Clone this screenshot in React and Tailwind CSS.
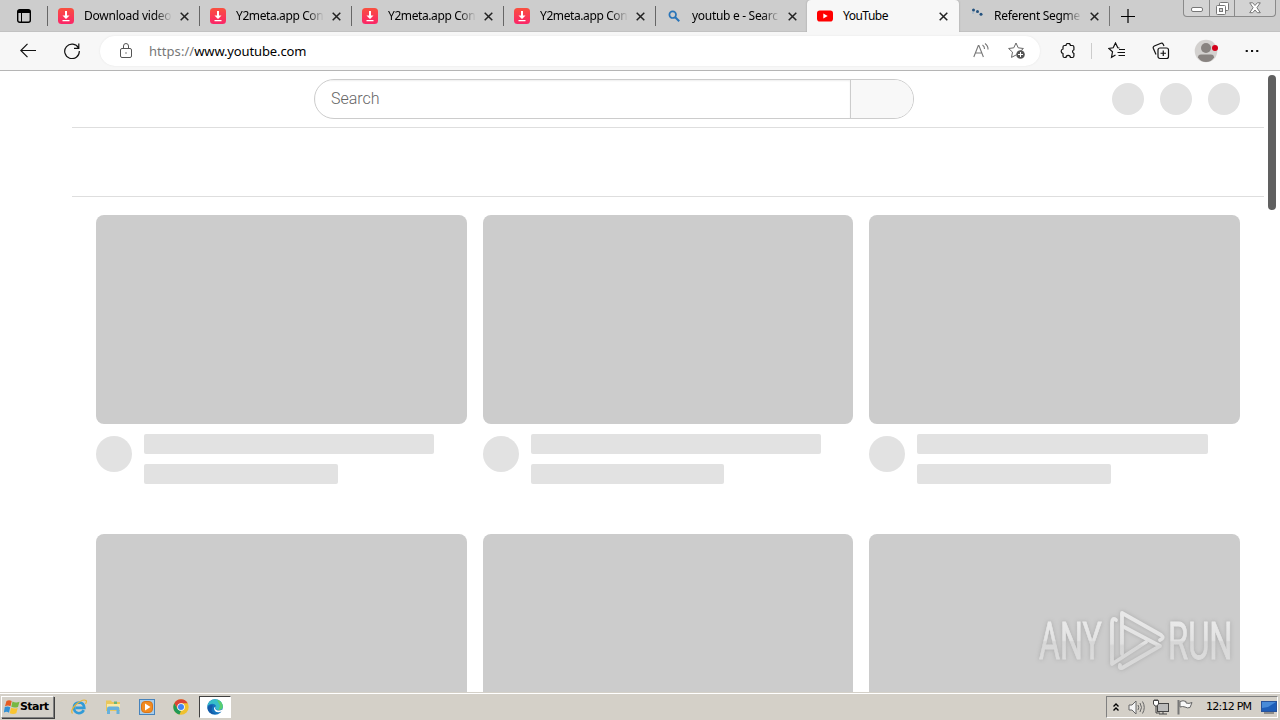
import clsx from 'clsx';

const tabs = [
    { title: 'Download video', icon: 'y2', spacing: 'tracking-[-0.25px]' },
    { title: 'Y2meta.app Con', icon: 'y2', spacing: 'tracking-[-0.4px]' },
    { title: 'Y2meta.app Con', icon: 'y2', spacing: 'tracking-[-0.4px]' },
    { title: 'Y2meta.app Con', icon: 'y2', spacing: 'tracking-[-0.4px]' },
    { title: 'youtub e - Searc', icon: 'search', spacing: 'tracking-[-0.3px]' },
    { title: 'YouTube', icon: 'youtube', active: true, spacing: 'tracking-[-0.5px]' },
    { title: 'Referent Segme', icon: 'dots', spacing: 'tracking-[-0.3px]' },
];

const Icon = ({ size = 16, className, children }) => (
    <svg width={size} height={size} viewBox={`0 0 ${size} ${size}`} fill="none" stroke="currentColor" strokeWidth="1" className={clsx('block shrink-0', className)}>
        {children}
    </svg>
);

const Favicon = ({ name }) => {
    if (name === 'y2') {
        return (
            <Icon>
                <defs>
                    <linearGradient id="y2" x1="0" y1="0" x2="0" y2="1">
                        <stop offset="0" stopColor="#f9503f" />
                        <stop offset="1" stopColor="#fb2568" />
                    </linearGradient>
                </defs>
                <rect width="16" height="16" rx="3.5" fill="url(#y2)" stroke="none" />
                <path d="M7 3h2v4.500h2.500L8 11 4.500 7.500H7zM4.500 12h7v1.300h-7z" fill="#fff" stroke="none" />
            </Icon>
        );
    }
    if (name === 'search') {
        return (
            <Icon className="text-[#2874b8]">
                <circle cx="6.700" cy="6.700" r="3.300" strokeWidth="1.700" />
                <path d="M9.200 9.200l4 4" strokeWidth="2" />
            </Icon>
        );
    }
    if (name === 'youtube') {
        return (
            <Icon>
                <rect y="2.500" width="16" height="11" rx="2.800" fill="#f00" stroke="none" />
                <path d="M6.300 5.500v5l4.400-2.500z" fill="#fff" stroke="none" />
            </Icon>
        );
    }
    return (
        <Icon>
            <g stroke="none" fill="#23527f">
                <circle cx="5.500" cy="2" r="1.500" />
                <circle cx="9.500" cy="3.500" r="1.500" />
                <circle cx="13" cy="6.300" r="1.500" />
                <circle cx="5" cy="5" r="0.800" fill="#8db1cd" />
            </g>
        </Icon>
    );
};

const Tab = ({ tab }) => (
    <div className={clsx('flex h-8 w-[152px] shrink-0 items-center pl-[10px]', tab.active && 'rounded-t-[4px] bg-[#f7f7f7] shadow-[0_0_2px_#999]')}>
        <Favicon name={tab.icon} />
        <span className={clsx('ml-[10px] w-[88px] text-[12px] leading-4 whitespace-nowrap text-black', tab.spacing, !tab.active && 'mask-r-from-80%')}>{tab.title}</span>
        <Icon size={9} className="ml-2 text-[#222]">
            <path d="M.7.7l7.600 7.600M8.300.7L.7 8.300" strokeWidth="1.500" />
        </Icon>
    </div>
);

const Divider = () => <div className="-ml-px h-5 w-px shrink-0 bg-[#666]" />;

const TabStrip = () => (
    <div className="flex h-8 shrink-0 items-center bg-[#cdcdcd] shadow-[inset_0_-1px_0_#c2c2c2]">
        <div className="flex w-12 shrink-0 pl-[17px]">
            <Icon size={14} className="text-black">
                <rect x=".7" y=".7" width="12.600" height="12.600" rx="2" strokeWidth="1.400" />
                <path d="M1 2.500h12" strokeWidth="3" />
                <path d="M4.500 3v10" />
            </Icon>
        </div>
        {tabs.map((tab, i) => (
            <div key={i} className={clsx('flex items-center', i > 4 && '-ml-px')}>
                {i < 5 && <Divider />}
                <Tab tab={tab} />
            </div>
        ))}
        <div className="-ml-px h-5 w-px bg-[#777]" />
        <Icon size={14} className="ml-[11px] text-black">
            <path d="M7 0v14M0 7.500h14" strokeWidth="1.200" />
        </Icon>
        <div className="mr-1 ml-auto flex h-[17px] w-[93px] self-start rounded-b-[4px] border border-t-0 border-[#8a8a8a] bg-[#d3d3d3] text-[#777]">
            <div className="flex w-[26px] justify-center border-r border-[#8a8a8a] pt-[7px]">
                <Icon size={12}>
                    <rect x=".5" y=".5" width="11" height="4" rx="1.500" fill="#fff" />
                </Icon>
            </div>
            <div className="flex w-[25px] justify-center border-r border-[#8a8a8a] pt-[2px]">
                <Icon size={13}>
                    <rect x="3.500" y=".5" width="9" height="8" rx="1" fill="#fff" />
                    <rect x=".5" y="3.500" width="9" height="9" rx="1" fill="#fff" />
                    <rect x="3.500" y="6.500" width="3" height="3" fill="#d3d3d3" />
                </Icon>
            </div>
            <div className="flex flex-1 justify-center pt-[2px]">
                <Icon size={12}>
                    <path d="M.7.800h3L6 3.500 8.300.8h3L7.900 5.700l3.400 5H8.300L6 8 3.700 10.700h-3l3.400-5z" fill="#fff" />
                </Icon>
            </div>
        </div>
    </div>
);

const Toolbar = () => (
    <div className="flex h-[39px] shrink-0 items-center border-b border-[#b5b5b5] bg-[#f7f7f7] text-[#111]">
        <Icon size={16} className="ml-5">
            <path d="M16 7.500H.8M7.500.8L.8 7.500l6.700 6.700" strokeWidth="1.200" />
        </Icon>
        <Icon size={16} className="ml-[28px]">
            <path d="M14.500 5A7.300 7.300 0 1 0 15.300 8M14.800.5v4.800H10" strokeWidth="1.200" />
        </Icon>
        <div className="ml-5 flex h-[30px] w-[940px] shrink-0 items-center rounded-full bg-white pr-[14px] pl-[19px] shadow-[0_0_2px_#e3e3e3]">
            <Icon size={14} className="h-4 text-[#555]">
                <rect x="1.500" y="4.500" width="11" height="9" rx="1.500" />
                <path d="M4.500 4V2a2.500 2.500 0 0 1 5 0v2" />
                <circle cx="7" cy="9" r=".7" fill="currentColor" stroke="none" />
            </Icon>
            <div className="ml-4 text-[13px] leading-4 text-black">
                <span className="tracking-[0.05px] text-[#777]">https://</span>
                <span className="tracking-[-0.12px]">www.youtube.com</span>
            </div>
            <Icon size={16} className="ml-auto text-[#777]">
                <path d="M.8 14L5.300 2.500h.6L10.400 14M2.300 10h6.600M9.500 2q2.200 1.500 2 4M12 .5q3.300 2.500 3 6" strokeWidth="1.100" />
            </Icon>
            <Icon size={18} className="ml-[19px] text-[#666]">
                <path d="M8 1l2.200 4.800 5.200.7-3.500 3.200M8 1L5.800 5.800l-5.200.7 3.900 3.600-1 5.300L8 13" />
                <circle cx="12.500" cy="12.500" r="4.300" fill="#555" stroke="none" />
                <path d="M12.500 10v5M10 12.500h5" stroke="#fff" />
            </Icon>
        </div>
        <Icon size={16} className="ml-[20px]">
            <path d="M3 4q0-1.500 1.500-1.500H6a2.200 2.200 0 0 1 4.400 0h2q1.500 0 1.500 1.500v2.700a2 2 0 0 0 0 3.800v2.500q0 1.500-1.500 1.500h-2a2.200 2.200 0 0 0-4.400 0H4.500Q3 14.500 3 13v-2.500a2.300 2.300 0 0 1 0-4.500z" strokeWidth="1.200" />
        </Icon>
        <div className="ml-[15px] h-4 w-px bg-[#ccc]" />
        <Icon size={18} className="ml-[16px]">
            <path d="M11.500 6L9.800 5.800 7.500 1 5.200 5.800.8 6.400l3.700 3.400-1 5.500L7.500 13M11 7.500h6M9.500 10.500H17M10.500 13.500H17" strokeWidth="1.200" />
        </Icon>
        <Icon size={18} className="ml-[26px]">
            <rect x="6" y="6" width="10.500" height="10.500" rx="2" strokeWidth="1.200" />
            <path d="M11.250 8.500v5.500M8.500 11.250H14M4 12.500L1.300 6.300Q.8 4.800 2.300 4L9 1.200q1.400-.5 2.200 1L12 4" strokeWidth="1.200" />
        </Icon>
        <Icon size={24} className="ml-[24px]">
            <g stroke="none">
                <circle cx="12" cy="12" r="11.300" fill="#d3d1cf" />
                <circle cx="12" cy="9" r="5" fill="#888380" />
                <path d="M4 18.500q0-3 3-3h10q3 0 3 3-3 4.500-8 4.500t-8-4.500z" fill="#888380" />
                <circle cx="21" cy="9" r="3" fill="#d4001a" />
            </g>
        </Icon>
        <Icon size={14} className="ml-[27px]">
            <path d="M.7 7h2.100M6 7h2.100M11.200 7h2.100" strokeWidth="2" />
        </Icon>
    </div>
);

const VideoCard = ({ short }) => (
    <div>
        <div className="h-[209px] rounded-lg bg-[#ccc]" />
        {!short && (
            <div className="flex gap-3 pt-[10px]">
                <div className="mt-[2px] size-9 shrink-0 rounded-full bg-[#e2e2e2]" />
                <div className="flex flex-1 flex-col gap-[10px]">
                    <div className="h-5 w-[90%] rounded-[2px] bg-[#e2e2e2]" />
                    <div className="h-5 w-[60%] rounded-[2px] bg-[#e2e2e2]" />
                </div>
            </div>
        )}
    </div>
);

const Watermark = () => (
    <svg width="200" height="70" viewBox="0 0 200 70" className="absolute top-[535px] left-[1036px] block drop-shadow-[0_0_2px_#aaa]">
        <defs>
            <linearGradient id="wm" gradientUnits="userSpaceOnUse" x1="0" y1="5" x2="0" y2="65">
                <stop offset="0" stopColor="#e9e9e9" />
                <stop offset=".54" stopColor="#e2e2e2" />
                <stop offset=".58" stopColor="#d6d6d6" />
                <stop offset="1" stopColor="#dadada" />
            </linearGradient>
            <linearGradient id="wmText" gradientUnits="userSpaceOnUse" x1="0" y1="-36" x2="0" y2="0">
                <stop offset="0" stopColor="#e9e9e9" />
                <stop offset=".48" stopColor="#e3e3e3" />
                <stop offset=".52" stopColor="#d7d7d7" />
                <stop offset="1" stopColor="#dcdcdc" />
            </linearGradient>
        </defs>
        <g fill="url(#wmText)" stroke="url(#wmText)" strokeWidth=".8" className="font-['Roboto',sans-serif]" fontSize="51">
            <text transform="translate(3 53) scale(.64 1)" textLength="98" lengthAdjust="spacingAndGlyphs">ANY</text>
            <text transform="translate(132 53) scale(.64 1)" textLength="101" lengthAdjust="spacingAndGlyphs">RUN</text>
        </g>
        <g fill="none" stroke="url(#wm)" strokeWidth="3.800" strokeLinecap="round" strokeLinejoin="round">
            <path d="M80 14q-4-3-4 3v41l34-22" />
            <path d="M86 48V7L125 29q4 3-1 5" />
            <path d="M88 21l36 19-38 22q-3 1-2-3" />
        </g>
    </svg>
);

const YouTubePage = () => (
    <div className="relative h-[621px] shrink-0 overflow-hidden bg-white">
        <div className="mr-4 ml-[72px]">
            <div className="flex h-[57px] items-center border-b border-[#dedede]">
                <div className="ml-[242px] flex h-10 w-[600px] overflow-hidden rounded-full border border-[#ccc]">
                    <div className="flex-1 pt-[7px] pl-4 font-['Roboto',sans-serif] text-[16px] leading-6 font-light text-[#666] shadow-[inset_0_1px_2px_#eee]">Search</div>
                    <div className="w-[63px] border-l border-[#ccc] bg-[#f8f8f8]" />
                </div>
                <div className="mr-6 ml-auto flex gap-4">
                    <div className="size-8 rounded-full bg-[#e2e2e2]" />
                    <div className="size-8 rounded-full bg-[#e2e2e2]" />
                    <div className="size-8 rounded-full bg-[#e2e2e2]" />
                </div>
            </div>
            <div className="h-[69px] border-b border-[#dedede]" />
            <div className="grid grid-cols-3 gap-x-4 gap-y-[50px] px-6 pt-[18px]">
                {[0, 1, 2, 3, 4, 5].map((n) => (
                    <VideoCard key={n} short={n > 2} />
                ))}
            </div>
        </div>
        {/* Scrollbar thumb */}
        <div className="absolute top-1 right-1 h-[135px] w-2 rounded-full bg-[#606060]" />
        <Watermark />
    </div>
);

const Taskbar = () => (
    <div className="flex h-7 shrink-0 items-center bg-[#d4d0c8] pt-[2px] shadow-[inset_0_1px_0_#d4d0c8,inset_0_2px_0_#fff]">
        <div className="ml-px flex h-[22px] w-[53px] items-center border border-t-white border-r-[#808080] border-b-[#808080] border-l-white pl-[2px] shadow-[1px_1px_0_#404040]">
            <Icon size={16}>
                <g stroke="none">
                    <path d="M2.500 2Q5 .3 7.700 2L6.500 7.300Q4 5.800 1 7.300z" fill="#e65c22" />
                    <path d="M8.500 2.500Q12 4.300 15.500 2.700l-1.500 5.200Q10.500 9.300 7.300 7.800z" fill="#77b843" />
                    <path d="M.8 8Q3.700 6.700 6.200 8.200L5 13.700Q2.600 12.100-.2 13.500z" fill="#3291d6" />
                    <path d="M7.100 8.700q3.200 1.400 6.600.2l-1.400 5.400q-3.200 1.500-6.600-.1z" fill="#f9c430" />
                </g>
            </Icon>
            <span className="font-['DejaVu_Sans',sans-serif] text-[11px] font-bold tracking-[-0.55px] text-black">Start</span>
        </div>
        <div className="ml-[17px] flex items-center gap-[18px]">
            <Icon size={16}>
                <path d="M12.800 11.200Q11 14.300 7.900 14.300q-5-.4-5-5.700 0-4.900 5.200-5.100 5 .3 5.200 5.400H4.500" stroke="#319bd7" strokeWidth="2.600" />
                <path d="M1.500 14.500Q-1 11.500 5 5.500 12-.5 15 1.500q1 1-.5 3.500" stroke="#e6b436" strokeWidth="1.200" />
            </Icon>
            <Icon size={16}>
                <g stroke="none">
                    <path d="M1 1.500h5l1 1.500h8V12H1z" fill="#e9c75c" />
                    <path d="M2 5h13v6H2z" fill="#fae9a6" />
                    <path d="M9 2.500h3V5H9z" fill="#6bb576" />
                    <path d="M2 15V9.500q0-2 2-2h8.500q2 0 2 2V15h-3v-4H5v4z" fill="#67b1dc" />
                </g>
            </Icon>
            <Icon size={16}>
                <rect x=".5" y=".5" width="15" height="15" fill="#a9cdea" stroke="#4783bb" />
                <rect x="2.500" y="2.500" width="11" height="11" rx="3.500" fill="#f28b20" stroke="#d6751a" />
                <path d="M6 4.500v7L11.500 8z" fill="#fff" stroke="none" />
            </Icon>
            <Icon size={16}>
                <g stroke="none">
                    <circle cx="8" cy="8" r="7.700" fill="#efc12f" />
                    <path d="M1.300 4.200A7.700 7.700 0 0 1 14.700 4.200H8L4.700 10z" fill="#db4437" />
                    <path d="M1.300 4.200L4.700 10Q6 12 8 11.800L6.500 15.600A7.700 7.700 0 0 1 1.300 4.200z" fill="#209957" />
                    <circle cx="8" cy="8" r="3.800" fill="#fff" />
                    <circle cx="8" cy="8" r="3" fill="#4285f4" />
                </g>
            </Icon>
        </div>
        <div className="ml-[10px] flex h-[22px] w-8 items-center justify-center border border-t-[#404040] border-r-white border-b-white border-l-[#404040] bg-white">
            <Icon size={16}>
                <g stroke="none">
                    <circle cx="8" cy="8" r="7.800" fill="#1474be" />
                    <path d="M.4 7A7.700 7.700 0 0 1 8 .2q7 .3 7.800 7 .2 3.500-4.500 3.700-3.300 0-2.700-1.600Q10 7 7.500 5.300 4 3.700.4 7z" fill="#37bfc9" />
                    <path d="M10 .8q5.600 1.500 5.800 6.700-.2 3.300-4.500 3.400L13 7z" fill="#59ce70" />
                    <path d="M9 7.500q-2 2 .4 3.400 3 1.500 5.700-.4l.9 1.500-3 1Q7.500 14 7 9.500 7 8 9 7.500z" fill="#fff" />
                    <path d="M6 6.500q-4 6 2.500 8.500Q1.500 15.500.5 9 2 5 6 6.500z" fill="#1559a7" />
                </g>
            </Icon>
        </div>
        <div className="mr-[2px] ml-auto flex h-[22px] w-[172px] items-center border border-t-[#808080] border-r-white border-b-white border-l-[#808080] text-[#666]">
            <Icon size={8} className="ml-[5px] h-[10px] text-black">
                <path d="M1.500 3.500L4 1l2.500 2.500M1.500 7.500L4 5l2.500 2.500" strokeWidth="1.400" />
            </Icon>
            <Icon size={17} className="ml-[8px]">
                <path d="M1 6h3l4-4v13l-4-4H1z" fill="#f5f5f5" />
                <path d="M10 6q1.500 2.500 0 5M12 4q3 4.500 0 9M14.500 2.500q3.500 6 0 12" />
            </Icon>
            <Icon size={16} className="ml-[8px]">
                <rect x="4.500" y="4.500" width="11" height="8" fill="#bbb" stroke="#444" />
                <path d="M6 15h8M10 12.500V15M3 7v7h4" stroke="#444" />
                <path d="M.5 1.500h5V5L4 7H2L.5 5zM2 0v2M4 0v2" fill="#fff" stroke="#444" />
            </Icon>
            <Icon size={16} className="ml-[8px]">
                <path d="M1.500 1v14.500" strokeWidth="2" stroke="#777" />
                <path d="M3 2.500q3-1.500 6 0v1.500q3 1 6-.5l-2 5q-2.500 1-5-.5-2.500-1-5 0z" fill="#f8f8f8" />
            </Icon>
            <span className="ml-[13px] pt-px font-['DejaVu_Sans',sans-serif] text-[11px] tracking-[-0.75px] whitespace-nowrap text-black">12:12 PM</span>
            <Icon size={16} className="ml-auto">
                <rect x=".5" y="2.500" width="15" height="10" fill="#1e5eb8" stroke="#28539a" />
                <path d="M1 3h14L7 8 1 9z" fill="#488bd8" stroke="none" />
                <path d="M3 14h10" stroke="#777" strokeWidth="1.500" />
            </Icon>
        </div>
    </div>
);

const App = () => (
    <div className="flex h-[720px] w-[1280px] flex-col overflow-hidden bg-white font-['Noto_Sans',sans-serif]">
        <TabStrip />
        <Toolbar />
        <YouTubePage />
        <Taskbar />
    </div>
);

export default App;
